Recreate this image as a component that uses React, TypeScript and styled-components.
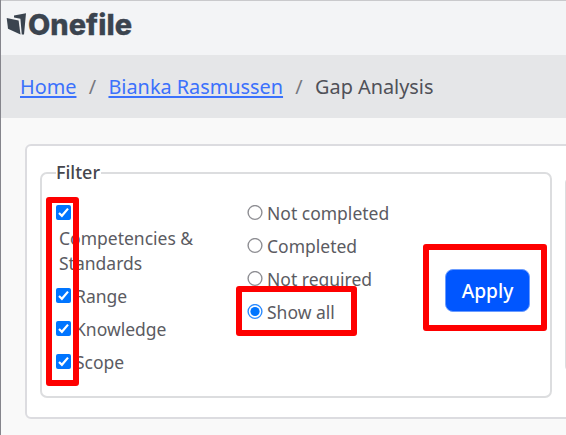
import React from "react";
import styled, { createGlobalStyle } from "styled-components";

const Global = createGlobalStyle`
  *, *::before, *::after { box-sizing: border-box; }
  body { margin: 0; background: #f9f9f9; }
`;

const Page = styled.div`
  position: relative;
  width: 566px;
  height: 435px;
  overflow: hidden;
  background: #f9f9f9;
  color: #5b5b62;
  font-family: "Noto Sans", sans-serif;
  font-size: 17.5px;
  border-left: 1px solid #85858c;
`;

const Header = styled.header`
  display: flex;
  align-items: flex-start;
  height: 55px;
  margin-left: -1px;
  background: #f3f4f6;
  border-top: 1px solid #c9c9cc;
  border-left: 1px solid #c3c4c8;
`;

const LogoMark = styled.svg`
  display: block;
  margin: -1px 0 0 -1px;
  overflow: visible;
`;

const Breadcrumb = styled.nav`
  display: flex;
  align-items: center;
  height: 63px;
  padding: 0 0 0 19px;
  background: #e5e6e8;
  color: #505158;
  font-size: 19.85px;
  line-height: 28px;
  white-space: pre;
`;

const Crumb = styled.a`
  color: #3b71fc;
  text-decoration: underline;
  text-decoration-thickness: 2px;
  text-underline-offset: 2px;
`;

const Slash = styled.span`
  width: 32px;
  text-align: center;
  color: #77787f;
`;

const Card = styled.section`
  display: flex;
  gap: 13px;
  width: 620px;
  height: 275px;
  margin: 26px 0 0 24px;
  padding: 15px 0 0 13px;
  background: #fff;
  border: 2px solid #dcdce0;
  border-radius: 6px;
`;

const Fieldset = styled.fieldset`
  display: flex;
  flex: none;
  width: 512px;
  height: 238px;
  margin: -1px 0 0;
  padding: 0 0 0 14px;
  border: 2px solid #dcdddf;
  border-radius: 7px;
`;

const Legend = styled.legend`
  padding: 0 1px 0 0;
  color: #45464d;
  font-size: 18px;
  font-weight: 500;
  line-height: 25px;
`;

const NextPanel = styled.div`
  flex: none;
  width: 40px;
  height: 195px;
  margin-top: 16px;
  border: 2px solid #dcdddf;
  border-radius: 6px;
`;

const Column = styled.div<{ $width: number }>`
  flex: none;
  width: ${(p) => p.$width}px;
  padding-top: 16px;
`;

const Option = styled.label<{ $stacked?: boolean }>`
  display: flex;
  flex-direction: ${(p) => (p.$stacked ? "column" : "row")};
  gap: ${(p) => (p.$stacked ? 6 : 4)}px;
  height: ${(p) => (p.$stacked ? 83 : 33)}px;
  svg { flex: none; margin-top: 4px; }
`;

const OptionText = styled.span<{ $indent?: boolean }>`
  line-height: 25px;
  padding-left: ${(p) => (p.$indent ? 3 : 0)}px;
`;

const Action = styled.div`
  padding-top: 84px;
`;

const ApplyButton = styled.button`
  width: 85px;
  height: 43px;
  padding: 1px 0 0;
  border: 1px solid #6b9cff;
  border-radius: 8px;
  background: #0056ff;
  color: #fff;
  font: 500 19.2px/28px "Noto Sans", sans-serif;
`;

const Highlight = styled.div<{ $x: number; $y: number; $w: number; $h: number }>`
  position: absolute;
  left: ${(p) => p.$x - 1}px;
  top: ${(p) => p.$y}px;
  width: ${(p) => p.$w}px;
  height: ${(p) => p.$h}px;
  border: 6px solid #fe0000;
  border-radius: 3px;
`;

const Logo = () => (
  <LogoMark width="140" height="50" viewBox="0 0 140 50" fill="#3b444f">
    <path d="M6.7 18 L18.6 20.5 L20.5 34.6 L8 28.8 Z" />
    <path d="M14 15.4 L26 13.3 L24 34.6 L21.8 34.5 L20.4 18.8 L14 17.4 Z" />
    <text
      x="28"
      y="34.9"
      textLength="104"
      lengthAdjust="spacingAndGlyphs"
      fontFamily="Inter"
      fontWeight="800"
      fontSize="28.5"
      stroke="#3b444f"
      strokeWidth="0.3"
    >
      Onefile
    </text>
  </LogoMark>
);

const Check = () => (
  <svg width="15" height="15" viewBox="0 0 15 15">
    <rect width="15" height="15" rx="2" fill="#0075ff" />
    <path d="M3 8 L5.9 10.8 L12 3.6" fill="none" stroke="#fff" strokeWidth="2.2" />
  </svg>
);

const Radio = ({ on }: { on?: boolean }) => (
  <svg width="16" height="16" viewBox="0 0.5 16 16">
    <circle cx="8" cy="8" r="6.9" fill="#fff" stroke={on ? "#2b8bff" : "#8e8e93"} strokeWidth="1.4" />
    {on && <circle cx="8" cy="8" r="4.6" fill="#0075ff" />}
  </svg>
);

const states = ["Not completed", "Completed", "Not required", "Show all"];

export default function App() {
  return (
    <>
      <Global />
      <Page>
        <Header><Logo /></Header>
        <Breadcrumb>
          <Crumb>Home</Crumb>
          <Slash>/</Slash>
          <Crumb>Bianka Rasmussen</Crumb>
          <Slash>/</Slash>
          <span>Gap Analysis</span>
        </Breadcrumb>
        <Card>
          <Fieldset>
            <Legend>Filter</Legend>
            <Column $width={191}>
              <Option $stacked>
                <Check />
                <OptionText $indent>Competencies &amp;<br />Standards</OptionText>
              </Option>
              {["Range", "Knowledge", "Scope"].map((t) => (
                <Option key={t}><Check /><OptionText>{t}</OptionText></Option>
              ))}
            </Column>
            <Column $width={198}>
              {states.map((t) => (
                <Option key={t}><Radio on={t === "Show all"} /><OptionText>{t}</OptionText></Option>
              ))}
            </Column>
            <Action><ApplyButton>Apply</ApplyButton></Action>
          </Fieldset>
          <NextPanel />
        </Card>
        <Highlight $x={46} $y={197} $w={33} $h={189} />
        <Highlight $x={236} $y={286} $w={121} $h={50} />
        <Highlight $x={423} $y={244} $w={124} $h={87} />
      </Page>
    </>
  );
}
